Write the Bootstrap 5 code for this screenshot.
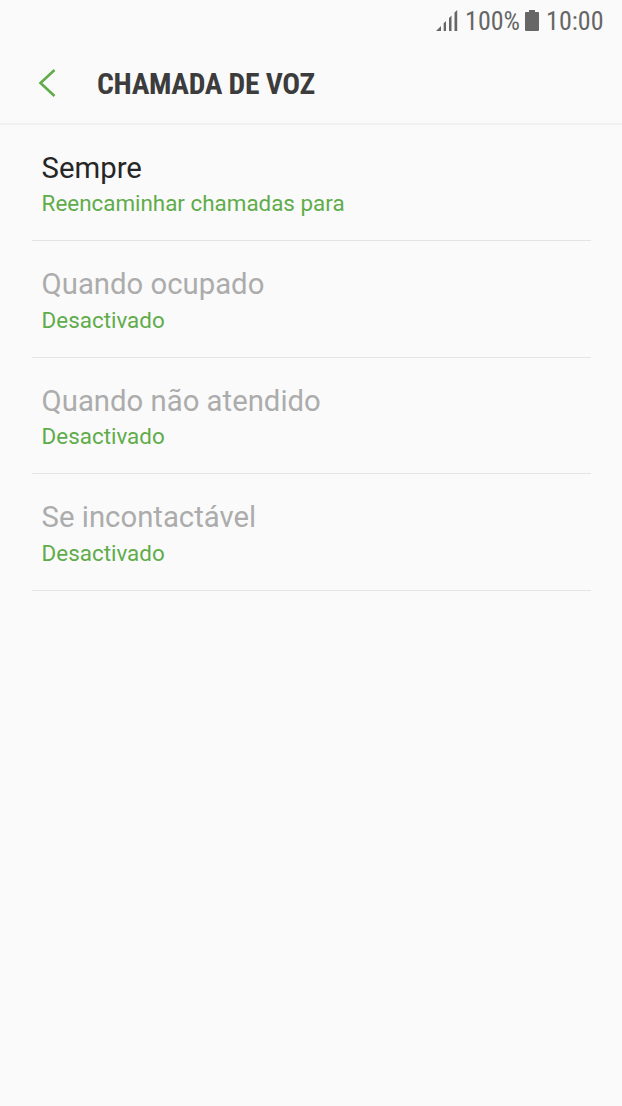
<!DOCTYPE html>
<html lang="pt">
<head>
<meta charset="utf-8">
<meta name="viewport" content="width=device-width, initial-scale=1">
<title>Chamada de voz</title>
<link href="https://cdn.jsdelivr.net/npm/bootstrap@5.3.0/dist/css/bootstrap.min.css" rel="stylesheet">
<style>
body{background:#fafafa;font-family:Roboto,sans-serif;min-height:100vh}
.status{height:42px;padding-right:18.5px;color:#666;font:400 26px/42px "Roboto Condensed",Roboto,sans-serif;font-stretch:75%}
.signal{margin:0 7px 1px 0}
.battery{margin:0 7px 1px 5px}
.title-bar{height:83px;border-bottom:2px solid #f0f0f0;padding-left:38px}
.title-bar h1{font:700 29.6px/36px "Roboto Condensed",Roboto,sans-serif;font-stretch:75%;letter-spacing:-.33px;color:#3c3c3c;margin-left:40px;padding-top:2px}
.options{padding:0 31px 0 32px;margin-top:-.6px}
.option{height:116.6px;padding:26.2px 10px 0;border-bottom:1px solid #e4e4e4}
.option-name{font-size:29.3px;line-height:35.5px;color:#262626;margin-left:-.4px}
.option-off{color:#acacac}
.option-state{font-size:22.4px;line-height:34px;color:#60ac4a;margin-left:-.4px}
</style>
</head>
<body>
<div class="status d-flex justify-content-end align-items-center">
<svg class="signal" width="22" height="21" viewBox="0 0 22 21" fill="#666"><path d="M0 21 5 16V21ZM7.7 13.3 10 11V21H7.7ZM13 8 15.5 5.5V21H13ZM18.5 2.5 21.2 0V21H18.5Z"/></svg>
<span class="charge">100%</span>
<svg class="battery" width="14" height="21" viewBox="0 0 14 21" fill="#666"><path d="M4 0H10V2H13Q14 2 14 3V20Q14 21 13 21H1Q0 21 0 20V3Q0 2 1 2H4Z"/></svg>
<span class="clock">10:00</span>
</div>
<header class="title-bar d-flex align-items-center">
<svg width="19" height="30" viewBox="0 0 19 30" fill="none" stroke="#60ac4a" stroke-width="2.6"><path d="M16.5 2 2.5 15 16.5 28"/></svg>
<h1 class="mb-0">CHAMADA DE VOZ</h1>
</header>
<main class="options">
<div class="option"><div class="option-name">Sempre</div><div class="option-state">Reencaminhar chamadas para</div></div>
<div class="option"><div class="option-name option-off">Quando ocupado</div><div class="option-state">Desactivado</div></div>
<div class="option"><div class="option-name option-off">Quando não atendido</div><div class="option-state">Desactivado</div></div>
<div class="option"><div class="option-name option-off">Se incontactável</div><div class="option-state">Desactivado</div></div>
</main>
<script src="https://cdn.jsdelivr.net/npm/bootstrap@5.3.0/dist/js/bootstrap.bundle.min.js"></script>
</body>
</html>
